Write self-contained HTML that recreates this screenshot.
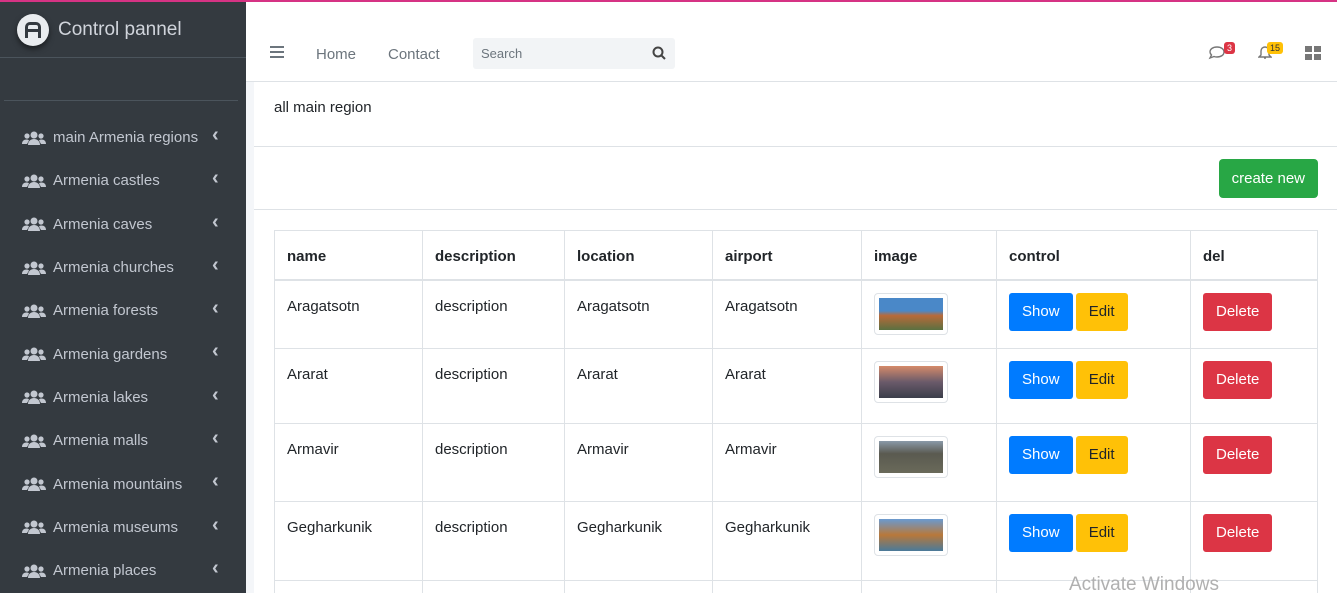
<!DOCTYPE html>
<html style="overflow:hidden;width:1337px;height:593px"><head><style>
*{box-sizing:border-box;margin:0;padding:0}
body{width:1337px;height:593px;overflow:hidden;font-family:"Liberation Sans",sans-serif;background:#f4f6f9;position:relative;font-size:15px;color:#212529}
.top{position:absolute;top:0;left:0;width:1337px;height:2px;background:#d63384}
.sb{position:absolute;top:2px;left:0;width:246px;height:591px;background:#343a40;color:#c2c7d0;z-index:2}
.brand{height:56px;border-bottom:1px solid #4b545c;display:flex;align-items:center;padding-left:17px;font-size:19px;color:#d0d4db}
.logo{width:32px;height:32px;border-radius:50%;background:#e9ecef;margin-right:9px;display:flex;align-items:center;justify-content:center;box-shadow:0 3px 6px rgba(0,0,0,.5)}
.logo b{width:16px;height:16px;border:3px solid #343a40;border-radius:5px 5px 0 0;border-bottom:none;position:relative}
.logo b:after{content:"";position:absolute;left:0;right:0;top:4px;height:3px;background:#343a40}
.hr{margin:42px 8px 0 4px;border-top:1px solid #4b545c}
.it{height:43.3px;display:flex;align-items:center;padding-left:22px;font-size:15px;position:relative;color:#c2c7d0}
.ic{width:24px;height:14px;margin-right:7px}
.it:after{content:"‹";position:absolute;left:212px;top:8px;font-size:20px;font-weight:bold}
.hd{position:absolute;left:246px;top:2px;right:0;height:80px;background:#fff;border-bottom:1px solid #dee2e6}
.nav{position:absolute;top:44px;font-size:15px;color:#6c757d}
.srch{position:absolute;left:227px;top:36px;width:202px;height:31px;background:#f2f4f6;border-radius:3px;font-size:13px;color:#6c757d;padding:8px 8px}
.card{position:absolute;left:254px;top:82px;right:0;height:511px;background:#fff;overflow:hidden}
.t1{height:65px;border-bottom:1px solid #dee2e6;padding:17px 20px;font-size:15px}
.t2{height:63px;border-bottom:1px solid #dee2e6;position:relative}
.cn{position:absolute;right:19px;top:12px;background:#28a745;color:#fff;border-radius:4px;padding:11px 13px;font-size:15px}
table{position:absolute;left:20px;top:148px;width:1044px;border-collapse:collapse}
td,th{border:1px solid #dee2e6;text-align:left;vertical-align:top;padding:17px 12px 12px;font-size:15px}
td:nth-child(5),td:nth-child(6),td:nth-child(7){padding-top:12px}
th{height:49px;padding-top:17px;border-bottom:2px solid #dee2e6}
.bt{display:inline-block;color:#fff;padding:10px 13px;line-height:18px;border-radius:3px;font-size:15px;margin-right:-1px}
.img{width:74px;height:42px;border:1px solid #dee2e6;border-radius:4px;padding:4px;background:#fff}
.img div{width:100%;height:100%}
</style></head><body>
<div class="top"></div>
<div class="sb">
<div class="brand"><div class="logo"><b></b></div>Control pannel</div>
<div class="hr"></div>
<div style="height:15px"></div>
<div class="it"><svg class="ic" viewBox="0 0 24 14"><circle cx="12" cy="4" r="3.5" fill="#c2c7d0"/><circle cx="5" cy="5" r="2.6" fill="#c2c7d0"/><circle cx="19" cy="5" r="2.6" fill="#c2c7d0"/><path d="M6 14c0-4 3-6 6-6s6 2 6 6z M0 13c0-3 2-4.5 4.5-4.5 1 0 2 .3 2.5 1L5 13z M24 13c0-3-2-4.5-4.5-4.5-1 0-2 .3-2.5 1L19 13z" fill="#c2c7d0"/></svg>main Armenia regions</div>
<div class="it"><svg class="ic" viewBox="0 0 24 14"><circle cx="12" cy="4" r="3.5" fill="#c2c7d0"/><circle cx="5" cy="5" r="2.6" fill="#c2c7d0"/><circle cx="19" cy="5" r="2.6" fill="#c2c7d0"/><path d="M6 14c0-4 3-6 6-6s6 2 6 6z M0 13c0-3 2-4.5 4.5-4.5 1 0 2 .3 2.5 1L5 13z M24 13c0-3-2-4.5-4.5-4.5-1 0-2 .3-2.5 1L19 13z" fill="#c2c7d0"/></svg>Armenia castles</div>
<div class="it"><svg class="ic" viewBox="0 0 24 14"><circle cx="12" cy="4" r="3.5" fill="#c2c7d0"/><circle cx="5" cy="5" r="2.6" fill="#c2c7d0"/><circle cx="19" cy="5" r="2.6" fill="#c2c7d0"/><path d="M6 14c0-4 3-6 6-6s6 2 6 6z M0 13c0-3 2-4.5 4.5-4.5 1 0 2 .3 2.5 1L5 13z M24 13c0-3-2-4.5-4.5-4.5-1 0-2 .3-2.5 1L19 13z" fill="#c2c7d0"/></svg>Armenia caves</div>
<div class="it"><svg class="ic" viewBox="0 0 24 14"><circle cx="12" cy="4" r="3.5" fill="#c2c7d0"/><circle cx="5" cy="5" r="2.6" fill="#c2c7d0"/><circle cx="19" cy="5" r="2.6" fill="#c2c7d0"/><path d="M6 14c0-4 3-6 6-6s6 2 6 6z M0 13c0-3 2-4.5 4.5-4.5 1 0 2 .3 2.5 1L5 13z M24 13c0-3-2-4.5-4.5-4.5-1 0-2 .3-2.5 1L19 13z" fill="#c2c7d0"/></svg>Armenia churches</div>
<div class="it"><svg class="ic" viewBox="0 0 24 14"><circle cx="12" cy="4" r="3.5" fill="#c2c7d0"/><circle cx="5" cy="5" r="2.6" fill="#c2c7d0"/><circle cx="19" cy="5" r="2.6" fill="#c2c7d0"/><path d="M6 14c0-4 3-6 6-6s6 2 6 6z M0 13c0-3 2-4.5 4.5-4.5 1 0 2 .3 2.5 1L5 13z M24 13c0-3-2-4.5-4.5-4.5-1 0-2 .3-2.5 1L19 13z" fill="#c2c7d0"/></svg>Armenia forests</div>
<div class="it"><svg class="ic" viewBox="0 0 24 14"><circle cx="12" cy="4" r="3.5" fill="#c2c7d0"/><circle cx="5" cy="5" r="2.6" fill="#c2c7d0"/><circle cx="19" cy="5" r="2.6" fill="#c2c7d0"/><path d="M6 14c0-4 3-6 6-6s6 2 6 6z M0 13c0-3 2-4.5 4.5-4.5 1 0 2 .3 2.5 1L5 13z M24 13c0-3-2-4.5-4.5-4.5-1 0-2 .3-2.5 1L19 13z" fill="#c2c7d0"/></svg>Armenia gardens</div>
<div class="it"><svg class="ic" viewBox="0 0 24 14"><circle cx="12" cy="4" r="3.5" fill="#c2c7d0"/><circle cx="5" cy="5" r="2.6" fill="#c2c7d0"/><circle cx="19" cy="5" r="2.6" fill="#c2c7d0"/><path d="M6 14c0-4 3-6 6-6s6 2 6 6z M0 13c0-3 2-4.5 4.5-4.5 1 0 2 .3 2.5 1L5 13z M24 13c0-3-2-4.5-4.5-4.5-1 0-2 .3-2.5 1L19 13z" fill="#c2c7d0"/></svg>Armenia lakes</div>
<div class="it"><svg class="ic" viewBox="0 0 24 14"><circle cx="12" cy="4" r="3.5" fill="#c2c7d0"/><circle cx="5" cy="5" r="2.6" fill="#c2c7d0"/><circle cx="19" cy="5" r="2.6" fill="#c2c7d0"/><path d="M6 14c0-4 3-6 6-6s6 2 6 6z M0 13c0-3 2-4.5 4.5-4.5 1 0 2 .3 2.5 1L5 13z M24 13c0-3-2-4.5-4.5-4.5-1 0-2 .3-2.5 1L19 13z" fill="#c2c7d0"/></svg>Armenia malls</div>
<div class="it"><svg class="ic" viewBox="0 0 24 14"><circle cx="12" cy="4" r="3.5" fill="#c2c7d0"/><circle cx="5" cy="5" r="2.6" fill="#c2c7d0"/><circle cx="19" cy="5" r="2.6" fill="#c2c7d0"/><path d="M6 14c0-4 3-6 6-6s6 2 6 6z M0 13c0-3 2-4.5 4.5-4.5 1 0 2 .3 2.5 1L5 13z M24 13c0-3-2-4.5-4.5-4.5-1 0-2 .3-2.5 1L19 13z" fill="#c2c7d0"/></svg>Armenia mountains</div>
<div class="it"><svg class="ic" viewBox="0 0 24 14"><circle cx="12" cy="4" r="3.5" fill="#c2c7d0"/><circle cx="5" cy="5" r="2.6" fill="#c2c7d0"/><circle cx="19" cy="5" r="2.6" fill="#c2c7d0"/><path d="M6 14c0-4 3-6 6-6s6 2 6 6z M0 13c0-3 2-4.5 4.5-4.5 1 0 2 .3 2.5 1L5 13z M24 13c0-3-2-4.5-4.5-4.5-1 0-2 .3-2.5 1L19 13z" fill="#c2c7d0"/></svg>Armenia museums</div>
<div class="it"><svg class="ic" viewBox="0 0 24 14"><circle cx="12" cy="4" r="3.5" fill="#c2c7d0"/><circle cx="5" cy="5" r="2.6" fill="#c2c7d0"/><circle cx="19" cy="5" r="2.6" fill="#c2c7d0"/><path d="M6 14c0-4 3-6 6-6s6 2 6 6z M0 13c0-3 2-4.5 4.5-4.5 1 0 2 .3 2.5 1L5 13z M24 13c0-3-2-4.5-4.5-4.5-1 0-2 .3-2.5 1L19 13z" fill="#c2c7d0"/></svg>Armenia places</div>
</div>
<div class="hd">
<svg style="position:absolute;left:24px;top:44px" width="14" height="12"><path d="M0 1h14M0 6h14M0 11h14" stroke="#6c757d" stroke-width="2"/></svg>
<span class="nav" style="left:70px">Home</span>
<span class="nav" style="left:142px">Contact</span>
<div class="srch">Search<svg style="position:absolute;right:9px;top:8px" width="14" height="14"><circle cx="6" cy="6" r="4.5" stroke="#444" stroke-width="2" fill="none"/><path d="M9.5 9.5L13 13" stroke="#444" stroke-width="2"/></svg></div>
<svg style="position:absolute;left:962px;top:44px" width="20" height="14"><path d="M2 6c0-3 3-5 7-5s7 2 7 5-3 5-7 5c-1 0-2 0-3-.5L2 12l1.5-3C2.5 8 2 7 2 6z" stroke="#777" stroke-width="1.4" fill="none"/></svg>
<span style="position:absolute;left:978px;top:40px;background:#dc3545;color:#fff;font-size:9px;padding:1px 3px;border-radius:3px">3</span>
<svg style="position:absolute;left:1012px;top:42px" width="14" height="16"><path d="M3 11V7a4 4 0 0 1 8 0v4l2 2H1z M6 14h2" stroke="#777" stroke-width="1.4" fill="none"/></svg>
<span style="position:absolute;left:1021px;top:40px;background:#ffc107;color:#333;font-size:9px;padding:1px 3px;border-radius:3px">15</span>
<svg style="position:absolute;left:1059px;top:44px" width="16" height="14"><rect x="0" y="0" width="7" height="6" fill="#777"/><rect x="9" y="0" width="7" height="6" fill="#777"/><rect x="0" y="8" width="7" height="6" fill="#777"/><rect x="9" y="8" width="7" height="6" fill="#777"/></svg>
</div>
<div class="card">
<div class="t1">all main region</div>
<div class="t2"><span class="cn">create new</span></div>
<table>
<tr><th style="width:148px">name</th><th style="width:142px">description</th><th style="width:148px">location</th><th style="width:149px">airport</th><th style="width:135px">image</th><th style="width:194px">control</th><th>del</th></tr>
<tr style="height:69px"><td>Aragatsotn</td><td>description</td><td>Aragatsotn</td><td>Aragatsotn</td><td><div class="img"><div style="background:linear-gradient(#4a88c8 40%,#b86a3a 55%,#5a7040)"></div></div></td><td><span class="bt" style="background:#007bff">Show</span> <span class="bt" style="background:#ffc107;color:#212529">Edit</span></td><td><span class="bt" style="background:#dc3545">Delete</span></td></tr>
<tr style="height:75px"><td>Ararat</td><td>description</td><td>Ararat</td><td>Ararat</td><td><div class="img"><div style="background:linear-gradient(#d58a6a,#6a5a6a 50%,#3a3e4a)"></div></div></td><td><span class="bt" style="background:#007bff">Show</span> <span class="bt" style="background:#ffc107;color:#212529">Edit</span></td><td><span class="bt" style="background:#dc3545">Delete</span></td></tr>
<tr style="height:78px"><td>Armavir</td><td>description</td><td>Armavir</td><td>Armavir</td><td><div class="img"><div style="background:linear-gradient(#8a9aa8,#5a5a50 40%,#6a6a5a)"></div></div></td><td><span class="bt" style="background:#007bff">Show</span> <span class="bt" style="background:#ffc107;color:#212529">Edit</span></td><td><span class="bt" style="background:#dc3545">Delete</span></td></tr>
<tr style="height:79px"><td>Gegharkunik</td><td>description</td><td>Gegharkunik</td><td>Gegharkunik</td><td><div class="img"><div style="background:linear-gradient(#6a9ad0,#b8783a 50%,#4a7a9a)"></div></div></td><td><span class="bt" style="background:#007bff">Show</span> <span class="bt" style="background:#ffc107;color:#212529">Edit</span></td><td><span class="bt" style="background:#dc3545">Delete</span></td></tr>
<tr style="height:40px"><td></td><td></td><td></td><td></td><td></td><td></td><td></td></tr>
</table>
</div>
<div style="position:absolute;left:1069px;top:574px;font-size:19px;color:#b0b0b0">Activate Windows</div>
</body></html>
